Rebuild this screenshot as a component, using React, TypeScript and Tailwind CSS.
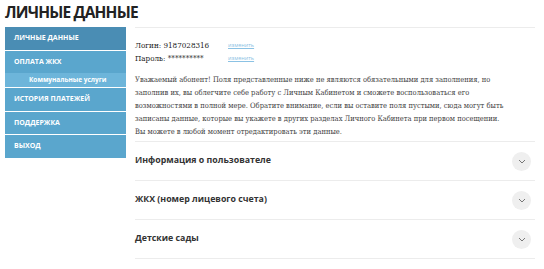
import React from "react";

const Chevron = () => (
  <div className="w-[19px] h-[19px] rounded-full bg-[#efefef] flex items-center justify-center">
    <svg width="8" height="5" viewBox="0 0 8 5" fill="none">
      <path d="M1 1l3 3 3-3" stroke="#777" strokeWidth="1" />
    </svg>
  </div>
);

export default function App() {
  const sans = { fontFamily: '"Open Sans", sans-serif' };
  const serif = { fontFamily: '"DejaVu Serif Condensed", "DejaVu Serif", serif' };
  return (
    <div className="w-[544px] h-[269px] bg-white overflow-hidden px-[5px]" style={sans}>
      <h1 className="text-[15.5px] font-bold leading-[24px] text-[#222] tracking-[-0.8px]">ЛИЧНЫЕ ДАННЫЕ</h1>
      <div className="flex mt-[3px]">
        <div className="w-[121px] flex flex-col text-white font-bold text-[7px]">
          <div className="h-[23px] flex items-center pl-[9px] bg-[#4a8db4]">ЛИЧНЫЕ ДАННЫЕ</div>
          <div className="mt-[1px] h-[22px] flex items-center pl-[9px] bg-[#5aa6cd]">ОПЛАТА ЖКХ</div>
          <div className="h-[14px] flex items-center pl-[24px] bg-[#6db5da] text-[6.5px]">Коммунальные услуги</div>
          <div className="mt-[1px] h-[23px] flex items-center pl-[9px] bg-[#5aa6cd]">ИСТОРИЯ ПЛАТЕЖЕЙ</div>
          <div className="mt-[1px] h-[22px] flex items-center pl-[9px] bg-[#5aa6cd]">ПОДДЕРЖКА</div>
          <div className="mt-[1px] h-[23px] flex items-center pl-[9px] bg-[#5aa6cd]">ВЫХОД</div>
        </div>
        <div className="ml-[9px] w-[400px]">
          <div className="border-t border-[#ececec]" />
          <div className="pt-[11px] text-[#333]">
            <div className="flex items-center h-[13px] text-[8px] text-[#222]" style={serif}>
              <span className="w-[93px]">Логин: 9187028316</span>
              <span className="text-[5.5px] text-[#8bc2e4] underline" style={sans}>изменить</span>
            </div>
            <div className="flex items-center h-[13px] text-[8px] text-[#222]" style={serif}>
              <span className="w-[93px]">Пароль: **********</span>
              <span className="text-[5.5px] text-[#8bc2e4] underline" style={sans}>изменить</span>
            </div>
            <p className="mt-[8px] leading-[13px] text-[7.5px] text-[#444] whitespace-nowrap" style={serif}>
              Уважаемый абонент! Поля представленные ниже не являются обязательными для заполнения, но
              <br />
              заполнив их, вы облегчите себе работу с Личным Кабинетом и сможете воспользоваться его
              <br />
              возможностями в полной мере. Обратите внимание, если вы оставите поля пустыми, сюда могут быть
              <br />
              записаны данные, которые вы укажете в других разделах Личного Кабинета при первом посещении.
              <br />
              Вы можете в любой момент отредактировать эти данные.
            </p>
          </div>
          <div className="mt-[3px]">
            {["Информация о пользователе", "ЖКХ (номер лицевого счета)", "Детские сады"].map((t) => (
              <div key={t} className="border-t border-[#ececec] h-[39px] flex items-center justify-between pr-[4px]">
                <span className="text-[8.8px] font-bold text-[#333]">{t}</span>
                <Chevron />
              </div>
            ))}
            <div className="border-t border-[#ececec]" />
          </div>
        </div>
      </div>
    </div>
  );
}
